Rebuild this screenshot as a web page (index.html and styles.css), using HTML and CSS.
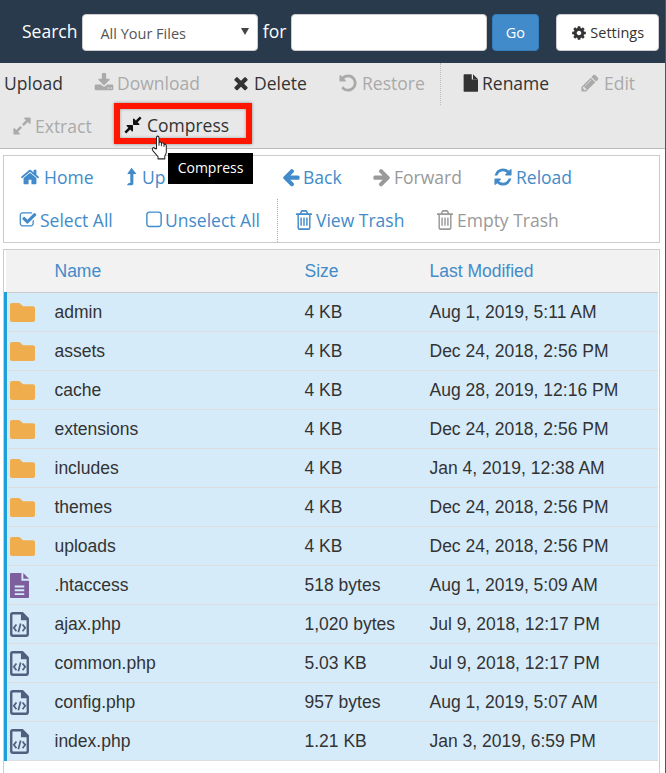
FILE: index.html
```html
<!DOCTYPE html>
<html lang="en">
<head>
<meta charset="utf-8">
<title>File Manager</title>
<link rel="stylesheet" href="styles.css">
</head>
<body>
<svg class="defs" width="0" height="0" aria-hidden="true">
  <symbol id="i-gear" viewBox="0 0 1792 1792"><path d="M1152 896q0-106-75-181t-181-75-181 75-75 181 75 181 181 75 181-75 75-181zm512-109v222q0 12-8 23t-20 13l-185 28q-19 54-39 91 35 50 107 138 10 12 10 25t-9 23q-27 37-99 108t-94 71q-12 0-26-9l-138-108q-44 23-91 38-16 136-29 186-7 28-36 28h-222q-14 0-24.500-8.500t-11.500-21.500l-28-184q-49-16-90-37l-141 107q-10 9-25 9-14 0-25-11-126-114-165-168-7-10-7-23 0-12 8-23 15-21 51-66.500t54-70.500q-27-50-41-99l-183-27q-13-2-21-12.500t-8-23.500v-222q0-12 8-23t19-13l186-28q14-46 39-92-40-57-107-138-10-12-10-24 0-10 9-23 26-36 98.500-107.500t94.500-71.500q13 0 26 10l138 107q44-23 91-38 16-136 29-186 7-28 36-28h222q14 0 24.500 8.500t11.500 21.500l28 184q49 16 90 37l142-107q9-9 24-9 13 0 25 10 129 119 165 170 7 8 7 22 0 12-8 23-15 21-51 66.500t-54 70.500q26 50 41 98l183 28q13 2 21 12.500t8 23.500z"/></symbol>
  <symbol id="i-download" viewBox="0 0 1792 1792"><path d="M1344 1344q0-26-19-45t-45-19-45 19-19 45 19 45 45 19 45-19 19-45zm256 0q0-26-19-45t-45-19-45 19-19 45 19 45 45 19 45-19 19-45zm128-224v320q0 40-28 68t-68 28h-1472q-40 0-68-28t-28-68v-320q0-40 28-68t68-28h465l135 136q58 56 136 56t136-56l136-136h464q40 0 68 28t28 68zm-325-569q17 41-14 70l-448 448q-18 19-45 19t-45-19l-448-448q-31-29-14-70 17-39 59-39h256v-448q0-26 19-45t45-19h256q26 0 45 19t19 45v448h256q42 0 59 39z"/></symbol>
  <symbol id="i-times" viewBox="0 0 1792 1792"><path d="M1490 1322q0 40-28 68l-136 136q-28 28-68 28t-68-28l-294-294-294 294q-28 28-68 28t-68-28l-136-136q-28-28-28-68t28-68l294-294-294-294q-28-28-28-68t28-68l136-136q28-28 68-28t68 28l294 294 294-294q28-28 68-28t68 28l136 136q28 28 28 68t-28 68l-294 294 294 294q28 28 28 68z"/></symbol>
  <symbol id="i-undo" viewBox="0 0 1792 1792"><path d="M1664 896q0 156-61 298t-164 245-245 164-298 61q-172 0-327-72.500t-264-204.500q-7-10-6.500-22.500t8.500-20.500l137-138q10-9 25-9 16 2 23 12 73 95 179 147t225 52q104 0 198.500-40.500t163.500-109.500 109.500-163.500 40.500-198.500-40.500-198.500-109.500-163.500-163.500-109.500-198.500-40.500q-98 0-188 35.500t-160 101.500l137 138q31 30 14 69-17 40-59 40h-448q-26 0-45-19t-19-45v-448q0-42 40-59 39-17 69 14l130 129q107-101 244.500-156.500t284.500-55.500q156 0 298 61t245 164 164 245 61 298z"/></symbol>
  <symbol id="i-file" viewBox="0 0 1536 1792"><path d="M896 0v544h640v1184q0 27-19 45t-45 19h-1344q-27 0-45-19t-19-45v-1664q0-27 19-45t45-19zM1024 0q15 4 27 15l470 470q11 12 15 27h-512z"/></symbol>
  <symbol id="i-pencil" viewBox="0 0 1792 1792"><path d="M491 1536l91-91-235-235-91 91v107h128v128h107zm523-928q0-22-22-22-10 0-17 7l-542 542q-7 7-7 17 0 22 22 22 10 0 17-7l542-542q7-7 7-17zm-54-192l416 416-832 832h-416v-416zm683 96q0 53-37 90l-166 166-416-416 166-165q36-38 90-38 53 0 91 38l235 234q37 39 37 91z"/></symbol>
  <symbol id="i-expand" viewBox="0 0 1792 1792"><path d="M883 1056q0 13-10 23l-332 332 144 144q19 19 19 45t-19 45-45 19h-448q-26 0-45-19t-19-45v-448q0-26 19-45t45-19 45 19l144 144 332-332q10-10 23-10t23 10l114 114q10 10 10 23zm781-864v448q0 26-19 45t-45 19-45-19l-144-144-332 332q-10 10-23 10t-23-10l-114-114q-10-10-10-23t10-23l332-332-144-144q-19-19-19-45t19-45 45-19h448q26 0 45 19t19 45z"/></symbol>
  <symbol id="i-compress" viewBox="0 0 1792 1792"><path d="M896 960v448q0 26-19 45t-45 19-45-19l-144-144-332 332q-10 10-23 10t-23-10l-114-114q-10-10-10-23t10-23l332-332-144-144q-19-19-19-45t19-45 45-19h448q26 0 45 19t19 45zm755-672q0 13-10 23l-332 332 144 144q19 19 19 45t-19 45-45 19h-448q-26 0-45-19t-19-45v-448q0-26 19-45t45-19 45 19l144 144 332-332q10-10 23-10t23 10l114 114q10 10 10 23z"/></symbol>
  <symbol id="i-home" viewBox="0 0 1792 1792"><path d="M1472 992v480q0 26-19 45t-45 19h-384v-384h-256v384h-384q-26 0-45-19t-19-45v-480q0-1 .5-3t.5-3l575-474 575 474q1 2 1 6zm223-69l-62 74q-8 9-21 11h-3q-13 0-21-7l-692-577-692 577q-12 8-24 7-13-2-21-11l-62-74q-8-10-7-23.500t11-21.500l719-599q32-26 76-26t76 26l244 204v-195q0-14 9-23t23-9h192q14 0 23 9t9 23v408l219 182q10 8 11 21.500t-7 23.500z"/></symbol>
  <symbol id="i-up" viewBox="0 0 1024 1792"><path d="M512 64l416 520q18 24 4 40-8 12-28 12h-224v880q0 20-16 36l-60 60q-14 12-32 12h-416q-20 0-28-16-8-18 6-34l110-120q12-14 32-14h128v-804h-224q-20 0-28-12-12-16 4-40z"/></symbol>
  <symbol id="i-left" viewBox="0 0 1792 1792"><path d="M1664 896v128q0 53-32.500 90.500t-84.500 37.500h-704l293 294q38 36 38 90t-38 90l-75 76q-37 37-90 37-52 0-91-37l-651-652q-37-37-37-90 0-52 37-91l651-650q38-38 91-38 52 0 90 38l75 74q38 38 38 91t-38 91l-293 293h704q52 0 84.500 37.500t32.500 90.500z"/></symbol>
  <symbol id="i-right" viewBox="0 0 1792 1792"><path d="M1600 960q0 54-37 91l-651 651q-39 37-91 37-51 0-90-37l-75-75q-38-38-38-91t38-91l293-293h-704q-52 0-84.500-37.500t-32.500-90.500v-128q0-53 32.500-90.500t84.500-37.500h704l-293-294q-38-36-38-90t38-90l75-75q38-38 90-38 53 0 91 38l651 651q37 35 37 90z"/></symbol>
  <symbol id="i-refresh" viewBox="0 0 1792 1792"><path d="M1639 1056q0 5-1 7-64 268-268 434.500t-478 166.500q-146 0-282.500-55t-243.500-157l-129 129q-19 19-45 19t-45-19-19-45v-448q0-26 19-45t45-19h448q26 0 45 19t19 45-19 45l-137 137q71 66 161 102t187 36q134 0 250-65t186-179q11-17 53-117 8-23 30-23h192q13 0 22.500 9.500t9.500 22.500zm25-800v448q0 26-19 45t-45 19h-448q-26 0-45-19t-19-45 19-45l138-138q-148-137-349-137-134 0-250 65t-186 179q-11 17-53 117-8 23-30 23h-199q-13 0-22.500-9.500t-9.500-22.500v-7q65-268 270-434.500t480-166.500q146 0 284 55.500t245 156.500l130-129q19-19 45-19t45 19 19 45z"/></symbol>
  <symbol id="i-check" viewBox="0 0 1792 1792"><path d="M1472 930v318q0 119-84.500 203.500t-203.500 84.500h-832q-119 0-203.500-84.500t-84.500-203.500v-832q0-119 84.500-203.500t203.500-84.500h832q63 0 117 25 15 7 18 23 3 17-9 29l-49 49q-10 10-23 10-3 0-9-2-23-6-45-6h-832q-66 0-113 47t-47 113v832q0 66 47 113t113 47h832q66 0 113-47t47-113v-254q0-13 9-22l64-64q10-10 23-10 6 0 12 3 20 8 20 29zm231-489l-814 814q-24 24-57 24t-57-24l-430-430q-24-24-24-57t24-57l110-110q24-24 57-24t57 24l263 263 647-647q24-24 57-24t57 24l110 110q24 24 24 57t-24 57z"/></symbol>
  <symbol id="i-square" viewBox="0 0 1792 1792"><path d="M1312 256h-832q-66 0-113 47t-47 113v832q0 66 47 113t113 47h832q66 0 113-47t47-113v-832q0-66-47-113t-113-47zm288 160v832q0 119-84.500 203.500t-203.500 84.500h-832q-119 0-203.500-84.500t-84.500-203.500v-832q0-119 84.500-203.500t203.500-84.500h832q119 0 203.500 84.500t84.500 203.500z"/></symbol>
  <symbol id="i-trash" viewBox="192 128 1408 1536" preserveAspectRatio="none"><path d="M704 736v576q0 14-9 23t-23 9h-64q-14 0-23-9t-9-23v-576q0-14 9-23t23-9h64q14 0 23 9t9 23zm256 0v576q0 14-9 23t-23 9h-64q-14 0-23-9t-9-23v-576q0-14 9-23t23-9h64q14 0 23 9t9 23zm256 0v576q0 14-9 23t-23 9h-64q-14 0-23-9t-9-23v-576q0-14 9-23t23-9h64q14 0 23 9t9 23zm128 724v-948h-896v948q0 22 7 40.500t14.500 27 10.500 8.500h832q3 0 10.500-8.500t14.500-27 7-40.500zm-672-1076h448l-48-117q-7-9-17-11h-317q-10 2-17 11zm928 32v64q0 14-9 23t-23 9h-96v948q0 83-47 143.500t-113 60.500h-832q-66 0-113-58.500t-47-141.500v-952h-96q-14 0-23-9t-9-23v-64q0-14 9-23t23-9h309l70-167q15-37 54-63t79-26h320q40 0 79 26t54 63l70 167h309q14 0 23 9t9 23z"/></symbol>
  <symbol id="i-folder" viewBox="0 0 26 20" preserveAspectRatio="none"><path d="M2 0h7q1 0 2 1l2.500 2.500H24q2 0 2 2V18q0 2-2 2H2q-2 0-2-2V2q0-2 2-2z"/></symbol>
  <symbol id="i-text" viewBox="0 0 20 26" preserveAspectRatio="none"><path fill-rule="evenodd" d="M1 0h11v8h8v17q0 1-1 1H1q-1 0-1-1V1q0-1 1-1zM5 13v2h10v-2zM5 17v2h10v-2zM5 21v2h10v-2zM14 0l6 6h-6z"/></symbol>
  <symbol id="i-code" viewBox="0 0 20 26" preserveAspectRatio="none"><path fill="none" stroke="currentColor" stroke-width="2.500" d="M2.800 1.300H13l5.700 5.700V23q0 1.700-1.700 1.700H3q-1.700 0-1.700-1.700V2.800q0-1.500 1.500-1.500z"/><path fill="currentColor" d="M11.500 1h2.500l5 5v2.500h-7.500z"/><path fill="none" stroke="currentColor" stroke-width="1.800" d="M6.800 13 4 16.500 6.800 20M13.200 13l2.800 3.500-2.800 3.500M11.200 12 8.800 21"/></symbol>
</svg>

<header class="search-bar">
  <span class="search-label">Search</span>
  <div class="select"><span>All Your Files</span><i class="caret"></i></div>
  <span class="for-label">for</span>
  <div class="search-input"></div>
  <button class="go">Go</button>
  <button class="settings"><svg class="ic gear"><use href="#i-gear"/></svg>Settings</button>
</header>

<section class="toolbar">
  <div class="tool-row">
    <span class="tool upload">Upload</span>
    <span class="tool off download"><svg class="ic"><use href="#i-download"/></svg>Download</span>
    <span class="tool delete"><svg class="ic"><use href="#i-times"/></svg>Delete</span>
    <span class="tool off restore"><svg class="ic"><use href="#i-undo"/></svg>Restore</span>
    <span class="tool-sep"></span>
    <span class="tool rename"><svg class="ic file"><use href="#i-file"/></svg>Rename</span>
    <span class="tool off edit"><svg class="ic"><use href="#i-pencil"/></svg>Edit</span>
  </div>
  <div class="tool-row row-two">
    <span class="tool off extract"><svg class="ic"><use href="#i-expand"/></svg>Extract</span>
    <span class="tool compress"><svg class="ic"><use href="#i-compress"/></svg>Compress</span>
  </div>
  <div class="tooltip">Compress</div>
  <svg class="hand" viewBox="0 0 17 22" preserveAspectRatio="none"><path fill="#fff" stroke="#222" stroke-width="1" stroke-linejoin="round" d="M5.500 12V2.500q0-1.500 1.200-1.500t1.300 1.500V9V7.500q0-1.300 1.200-1.300t1.200 1.300V9.500 8q0-1.200 1.200-1.200T13 8v2-1q0-1 1-1t1.300 1.200V15q0 2-1.500 3.500v2.500H7v-2L2 14q-1.300-1.500-.3-2.500T4 12z"/></svg>
</section>

<nav class="nav-box">
  <div class="nav-row">
    <a class="nav home"><svg class="ic"><use href="#i-home"/></svg>Home</a>
    <a class="nav up"><svg class="ic up-ic"><use href="#i-up"/></svg>Up</a>
    <a class="nav back"><svg class="ic"><use href="#i-left"/></svg>Back</a>
    <a class="nav off forward"><svg class="ic"><use href="#i-right"/></svg>Forward</a>
    <a class="nav reload"><svg class="ic"><use href="#i-refresh"/></svg>Reload</a>
  </div>
  <div class="nav-row">
    <a class="nav select-all"><svg class="ic"><use href="#i-check"/></svg>Select All</a>
    <a class="nav unselect"><svg class="ic"><use href="#i-square"/></svg>Unselect All</a>
    <span class="nav-sep"></span>
    <a class="nav view-trash"><svg class="ic trash"><use href="#i-trash"/></svg>View Trash</a>
    <a class="nav off empty-trash"><svg class="ic trash"><use href="#i-trash"/></svg>Empty Trash</a>
  </div>
</nav>

<main class="table-wrap">
  <table class="files">
    <colgroup><col class="c-icon"><col class="c-name"><col class="c-size"><col></colgroup>
    <thead>
      <tr><th></th><th>Name</th><th>Size</th><th>Last Modified</th></tr>
    </thead>
    <tbody>
      <tr><td class="t-icon"><svg class="fi folder"><use href="#i-folder"/></svg></td><td>admin</td><td>4 KB</td><td>Aug 1, 2019, 5:11 AM</td></tr>
      <tr><td class="t-icon"><svg class="fi folder"><use href="#i-folder"/></svg></td><td>assets</td><td>4 KB</td><td>Dec 24, 2018, 2:56 PM</td></tr>
      <tr><td class="t-icon"><svg class="fi folder"><use href="#i-folder"/></svg></td><td>cache</td><td>4 KB</td><td>Aug 28, 2019, 12:16 PM</td></tr>
      <tr><td class="t-icon"><svg class="fi folder"><use href="#i-folder"/></svg></td><td>extensions</td><td>4 KB</td><td>Dec 24, 2018, 2:56 PM</td></tr>
      <tr><td class="t-icon"><svg class="fi folder"><use href="#i-folder"/></svg></td><td>includes</td><td>4 KB</td><td>Jan 4, 2019, 12:38 AM</td></tr>
      <tr><td class="t-icon"><svg class="fi folder"><use href="#i-folder"/></svg></td><td>themes</td><td>4 KB</td><td>Dec 24, 2018, 2:56 PM</td></tr>
      <tr><td class="t-icon"><svg class="fi folder"><use href="#i-folder"/></svg></td><td>uploads</td><td>4 KB</td><td>Dec 24, 2018, 2:56 PM</td></tr>
      <tr><td class="t-icon"><svg class="fi text"><use href="#i-text"/></svg></td><td>.htaccess</td><td>518 bytes</td><td>Aug 1, 2019, 5:09 AM</td></tr>
      <tr><td class="t-icon"><svg class="fi code"><use href="#i-code"/></svg></td><td>ajax.php</td><td>1,020 bytes</td><td>Jul 9, 2018, 12:17 PM</td></tr>
      <tr><td class="t-icon"><svg class="fi code"><use href="#i-code"/></svg></td><td>common.php</td><td>5.03 KB</td><td>Jul 9, 2018, 12:17 PM</td></tr>
      <tr><td class="t-icon"><svg class="fi code"><use href="#i-code"/></svg></td><td>config.php</td><td>957 bytes</td><td>Aug 1, 2019, 5:07 AM</td></tr>
      <tr><td class="t-icon"><svg class="fi code"><use href="#i-code"/></svg></td><td>index.php</td><td>1.21 KB</td><td>Jan 3, 2019, 6:59 PM</td></tr>
    </tbody>
  </table>
</main>
</body>
</html>
```
FILE: styles.css
```css
* { box-sizing: border-box; }
html, body { height: 100%; margin: 0; overflow: hidden; }
body {
  display: flex;
  flex-direction: column;
  background: #fff;
  border-right: 1px solid #555;
  font-family: "Open Sans", sans-serif;
  color: #333;
}
.defs { position: absolute; }
.ic { width: 1em; height: 1em; fill: currentColor; flex: none; margin-right: 3px; }

.search-bar {
  height: 63px;
  flex: none;
  background: #293a4c;
  display: flex;
  align-items: center;
  padding: 2px 6px 0 22px;
  color: #fff;
  font-size: 17.5px;
}
.search-label { margin-right: 5px; margin-top: -4px; }
.select {
  width: 176px;
  height: 37px;
  background: #fff;
  border: 1px solid #ccc;
  border-radius: 4px;
  display: flex;
  align-items: center;
  justify-content: space-between;
  padding: 1px 9px 0 17px;
  color: #555;
  font-size: 14.5px;
}
.caret { border: 4px solid transparent; border-top: 7px solid #444; border-bottom: 0; margin-bottom: 4px; margin-right: -1px; }
.for-label { margin: -4px 5px 0 5px; }
.search-input {
  width: 196px;
  height: 37px;
  background: #fff;
  border: 1px solid #ccc;
  border-radius: 4px;
}
.go {
  width: 48px;
  height: 37px;
  margin-left: 5px;
  background: #428bca;
  border: 1px solid #357ebd;
  border-radius: 4px;
  color: #fff;
  font: 14.5px "Open Sans", sans-serif;
}
.settings {
  width: 103px;
  height: 37px;
  margin-left: 17px;
  background: #fff;
  border: 1px solid #ccc;
  border-radius: 4px;
  color: #333;
  font: 14.5px "Open Sans", sans-serif;
  display: flex;
  align-items: center;
  justify-content: center;
  white-space: nowrap;
}
.gear { font-size: 16px; }

.toolbar {
  position: relative;
  flex: none;
  height: 86px;
  background: #e8e8e8;
  border-bottom: 1px solid #bbb;
  font-size: 17.5px;
}
.tool-row { height: 42px; display: flex; align-items: center; padding-bottom: 2px; }
.tool { display: flex; align-items: center; color: #333; white-space: nowrap; }
.tool.off { color: #aaa; }
.tool .ic { font-size: 20px; }
.upload { margin-left: 4px; width: 90px; }
.download { width: 137px; }
.delete { width: 107px; }
.restore { width: 102px; }
.restore .ic { margin-right: 4px; }
.tool-sep { width: 0; height: 42px; border-left: 1px dotted #bbb; margin: 2px 22px 0 0; }
.rename { width: 117px; }
.rename .ic { width: 15px; margin-right: 4px; }
.edit .ic { margin-right: 4px; }
.row-two { align-items: flex-start; padding-bottom: 0; }
.extract { margin-left: 12px; margin-top: 9px; width: 102px; }
.compress {
  width: 138px;
  height: 41px;
  margin-top: -2px;
  padding: 3px 0 0 3px;
  border: 6px solid #ff1500;
  box-shadow: inset 0 0 3px #999, 0 0 3px #888;
}
.tool.compress .ic { color: #111; margin-right: 4px; }
.tooltip {
  position: absolute;
  left: 168px;
  top: 90px;
  width: 85px;
  height: 31px;
  padding-bottom: 2px;
  background: #000;
  color: #fff;
  font-size: 14px;
  display: flex;
  align-items: center;
  justify-content: center;
  z-index: 3;
}
.hand { position: absolute; left: 151px; top: 72px; width: 17px; height: 25px; z-index: 4; }

.nav-box {
  flex: none;
  margin: 6px 5px 0 3px;
  height: 88px;
  background: #fff;
  border: 1px solid #ccc;
  font-size: 17.5px;
}
.nav-row { height: 43px; display: flex; align-items: center; padding-bottom: 2px; }
.nav { display: flex; align-items: center; color: #428bca; white-space: nowrap; }
.nav.off { color: #999; }
.nav .ic { font-size: 20px; }
.home { margin-left: 16px; width: 105px; }
.home .ic { margin-right: 4px; }
.up { width: 156px; }
.up .ic { width: 13px; margin-right: 4px; }
.back { width: 91px; }
.back .ic { margin-right: 2px; }
.forward { width: 121px; }
.forward .ic { margin-right: 2px; }
.select-all { margin-left: 16px; width: 124px; }
.nav.select-all .ic { font-size: 18px; margin: 0 3px 0 -1px; }
.unselect { width: 133px; }
.unselect .ic { margin-right: 1px; }
.nav-sep { height: 43px; margin-top: 2px; border-left: 1px dotted #aaa; margin-right: 18px; }
.view-trash { width: 141px; }
.nav .trash { width: 16px; height: 20px; margin-right: 4px; }

.table-wrap {
  flex: 1;
  min-height: 0;
  margin: 6px 5px 0 3px;
  padding-right: 1px;
  border-left: 1px solid #ccc;
  border-top: 1px solid #ccc;
  border-right: 1px solid #ccc;
  overflow: hidden;
}
.files {
  width: 100%;
  table-layout: fixed;
  border-collapse: collapse;
  font-family: "Liberation Sans", Arial, sans-serif;
  font-size: 17.5px;
}
.c-icon { width: 49px; }
.c-name { width: 250px; }
.c-size { width: 125px; }
.files th {
  height: 42px;
  padding: 1px 0 0;
  background: #f2f2f2;
  border-bottom: 1px solid #ccc;
  color: #428bca;
  font-weight: 400;
  text-align: left;
}
.files td {
  height: 39px;
  padding: 2px 0 0;
  background: #d6ebfa;
  border-bottom: 1px solid #ddd;
  color: #333;
}
.files .t-icon { border-left: 3px solid #1c9fdb; padding-left: 3px; }
.fi { display: block; }
.folder { width: 25px; height: 19px; fill: #f0ad4e; }
.text { width: 19px; height: 25px; fill: #7e5f9e; }
.code { width: 19px; height: 25px; color: #4f5f7e; }
```
